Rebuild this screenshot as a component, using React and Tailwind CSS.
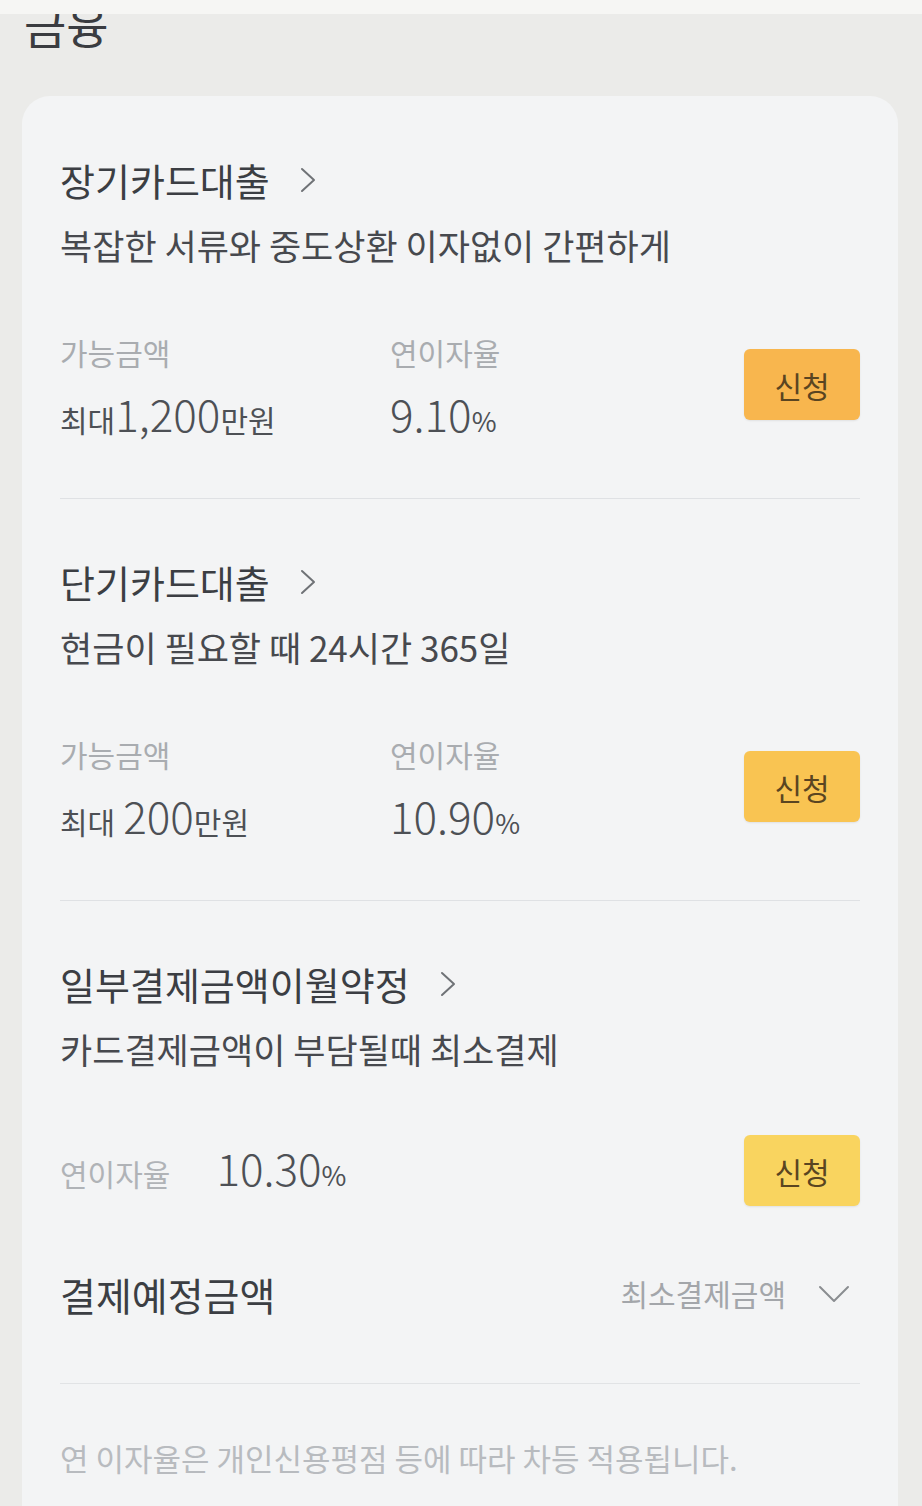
import React from 'react';

const font = "font-['Noto_Sans_CJK_KR','Noto_Sans',sans-serif]";

const ChevronRight = () => (
  <svg width="16" height="26" viewBox="0 0 16 26" fill="none">
    <path d="M2 2L14 13L2 24" stroke="#6f7276" strokeWidth="2" strokeLinecap="round" strokeLinejoin="round" />
  </svg>
);

const ChevronDown = () => (
  <svg width="32" height="18" viewBox="0 0 32 18" fill="none">
    <path d="M2 2L16 16L30 2" stroke="#8a8d91" strokeWidth="2" strokeLinecap="round" strokeLinejoin="round" />
  </svg>
);

const ApplyButton = ({ color }) => (
  <button className={`w-[116px] h-[71px] rounded-[6px] ${color} text-[30px] leading-none text-[#5a4521] shadow-[0_1px_2px_rgba(0,0,0,0.08)]`}>
    신청
  </button>
);

const Title = ({ children }) => (
  <div className="flex items-center h-[40px] gap-[30px]">
    <span className="text-[38px] leading-[40px] text-[#3b3e43]">{children}</span>
    <ChevronRight />
  </div>
);

const Subtitle = ({ children, className = '' }) => (
  <p className={`text-[35px] leading-[40px] text-[#47494e] ${className}`}>{children}</p>
);

const Amount = ({ prefix, number, spaced }) => (
  <div className="flex items-baseline h-[44px] text-[#4d5055]">
    <span className={`text-[30px] ${spaced ? 'mr-[8px]' : ''}`}>{prefix}</span>
    <span className="text-[44px] leading-[44px] font-light">{number}</span>
    <span className="text-[30px]">만원</span>
  </div>
);

const Rate = ({ value }) => (
  <div className="flex items-baseline h-[44px] text-[#4d5055]">
    <span className="text-[44px] leading-[44px] font-light">{value}</span>
    <span className="text-[27px]">%</span>
  </div>
);

const LoanSection = ({ title, subtitle, prefix, number, spaced, rate, color }) => (
  <div className="border-b border-[#dfe1e4] pb-[63px]">
    <Title>{title}</Title>
    <Subtitle className="mt-[25px]">{subtitle}</Subtitle>
    <div className="mt-[69px] flex items-center justify-between">
      <div className="flex">
        <div className="w-[330px]">
          <div className="text-[30px] leading-[36px] text-[#a9acb0]">가능금액</div>
          <div className="mt-[21px]">
            <Amount prefix={prefix} number={number} spaced={spaced} />
          </div>
        </div>
        <div>
          <div className="text-[30px] leading-[36px] text-[#a9acb0]">연이자율</div>
          <div className="mt-[21px]">
            <Rate value={rate} />
          </div>
        </div>
      </div>
      <ApplyButton color={color} />
    </div>
  </div>
);

export default function App() {
  return (
    <div className={`min-h-screen bg-[#ebebe9] ${font}`}>
      <div className="h-[14px] bg-[#f6f6f4]" />
      <div className="h-[82px] overflow-hidden px-[24px]">
        <div className="-mt-[16px] text-[46px] leading-[52px] text-[#3a3c40]">금융</div>
      </div>
      <div className="ml-[22px] mr-[24px] rounded-[28px] bg-[#f3f4f5] px-[38px] pt-[64px] pb-[60px]">
        <LoanSection
          title="장기카드대출"
          subtitle="복잡한 서류와 중도상환 이자없이 간편하게"
          prefix="최대"
          number="1,200"
          rate="9.10"
          color="bg-[#f8b64e]"
        />
        <div className="pt-[63px]">
          <LoanSection
            title="단기카드대출"
            subtitle="현금이 필요할 때 24시간 365일"
            prefix="최대"
            spaced
            number="200"
            rate="10.90"
            color="bg-[#f9c452]"
          />
        </div>
        <div className="pt-[63px]">
          <Title>일부결제금액이월약정</Title>
          <Subtitle className="mt-[25px]">카드결제금액이 부담될때 최소결제</Subtitle>
          <div className="mt-[66px] flex items-center justify-between">
            <div className="flex items-baseline gap-[46px]">
              <span className="text-[30px] text-[#b0b3b7]">연이자율</span>
              <Rate value="10.30" />
            </div>
            <ApplyButton color="bg-[#f9d45f]" />
          </div>
          <div className="mt-[65px] flex items-center justify-between border-b border-[#e1e3e5] pb-[67px]">
            <span className="text-[39px] leading-[40px] text-[#3b3e43]">결제예정금액</span>
            <div className="flex items-center gap-[32px] pr-[10px]">
              <span className="text-[30px] text-[#a3a6aa]">최소결제금액</span>
              <ChevronDown />
            </div>
          </div>
          <p className="mt-[54px] text-[31px] leading-[40px] text-[#b8bbbf]">
            연 이자율은 개인신용평점 등에 따라 차등 적용됩니다.
          </p>
        </div>
      </div>
    </div>
  );
}
